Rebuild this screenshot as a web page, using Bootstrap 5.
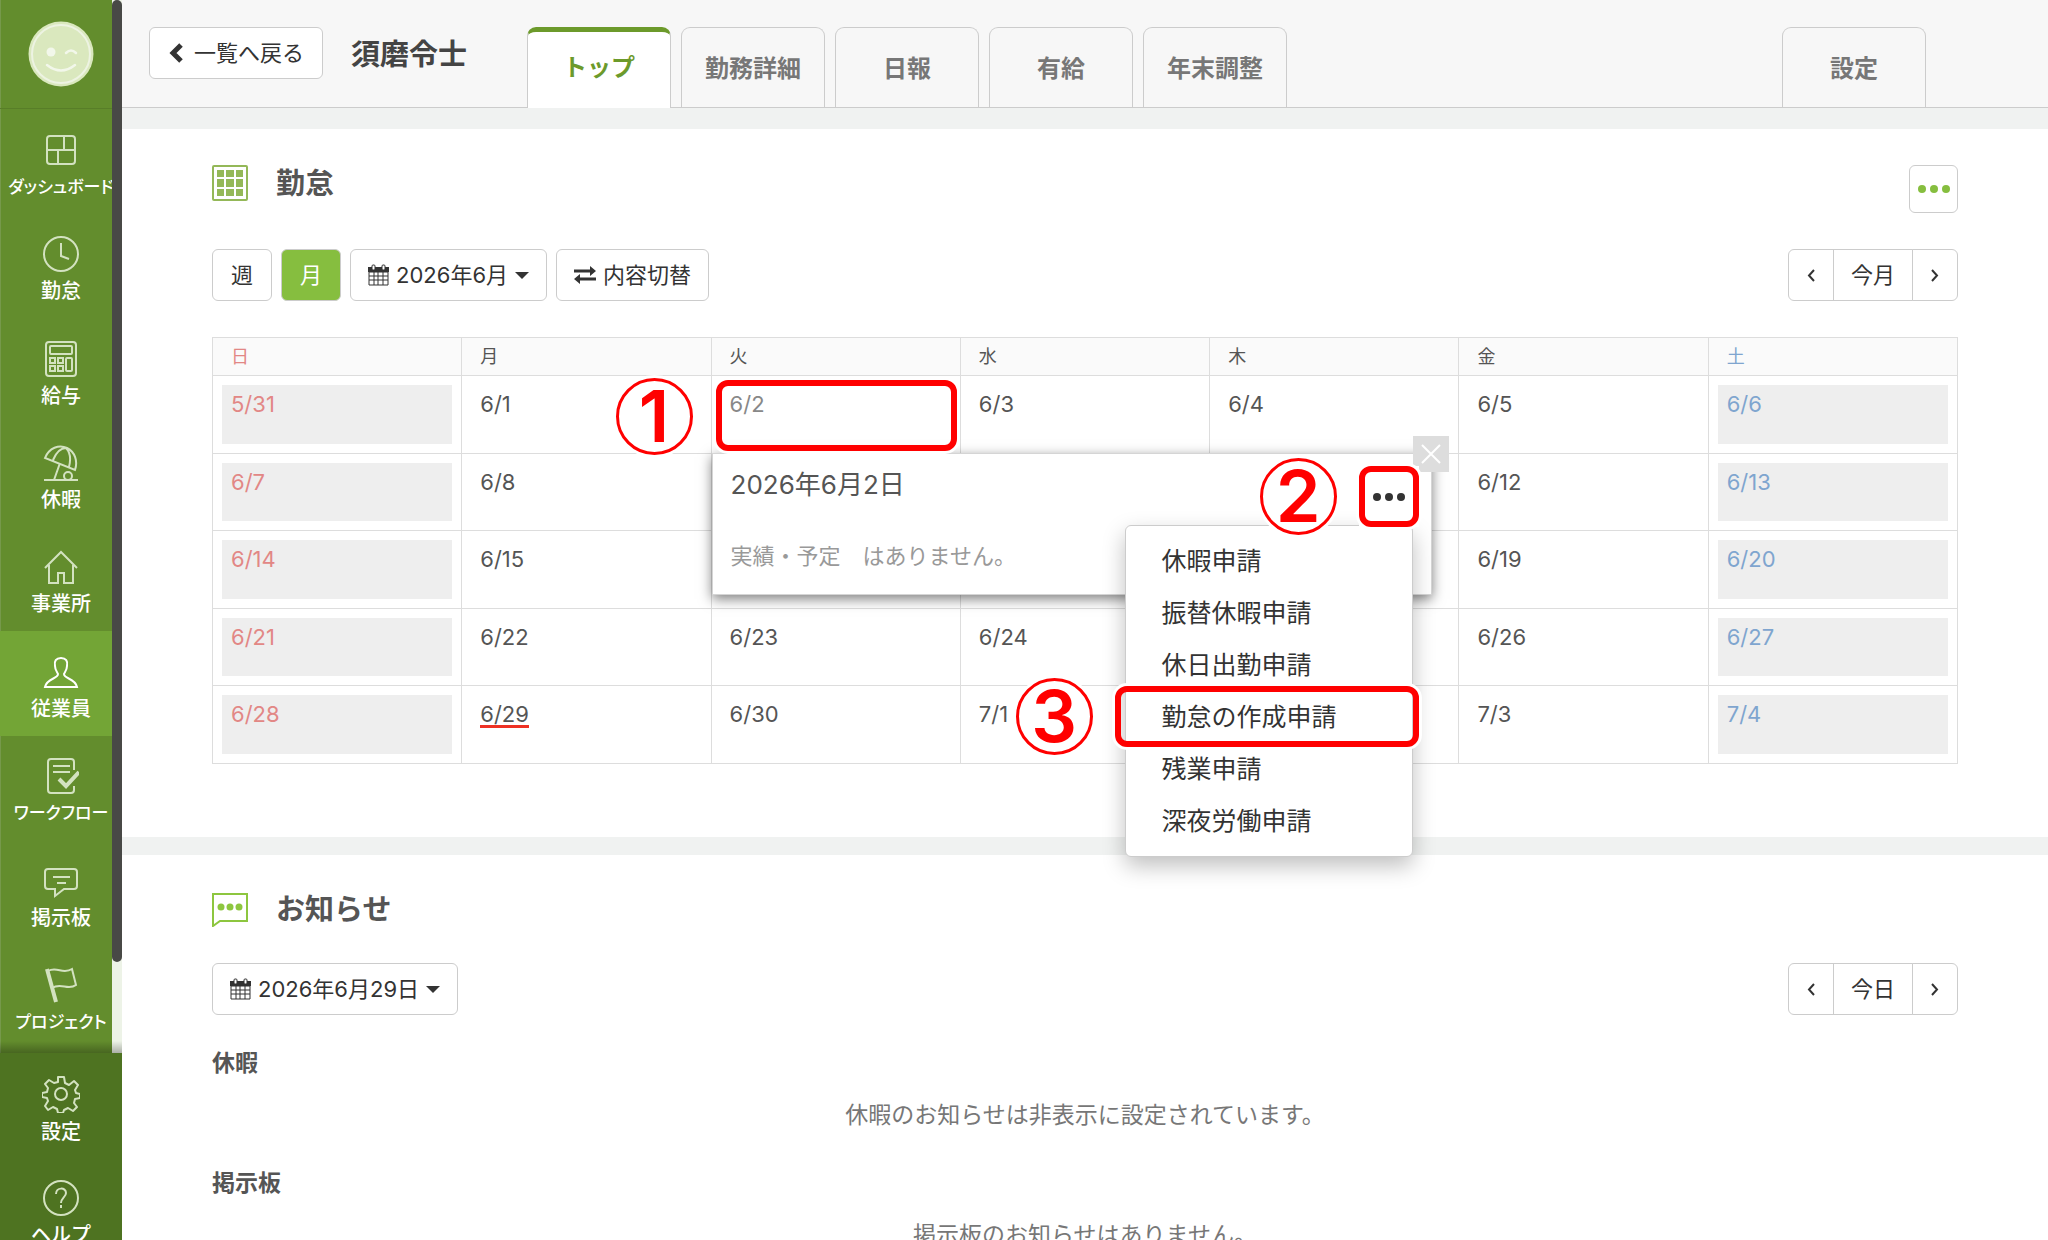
<!DOCTYPE html>
<html lang="ja">
<head>
<meta charset="utf-8">
<meta name="viewport" content="width=device-width, initial-scale=1">
<title>従業員 - 勤怠</title>
<link rel="stylesheet" href="https://cdn.jsdelivr.net/npm/bootstrap@5.3.0/dist/css/bootstrap.min.css">
<style>
:root { --line:#ddd; --btn-line:#ccc; --ink:#333; --title:#555; --green:#86be3f; --alert:#f00; }
body { font-family: Inter, "Noto Sans CJK JP", sans-serif; font-size:22px; line-height:30px; color:var(--title); background:#fff; }
svg { display:block; flex:none; }
.app-shell { height:100vh; overflow:hidden; }
.side { width:122px; background:#4e7321; }
.side-scroll { background:#638d2d; flex:1 1 0; min-height:0; padding-bottom:4px; box-shadow:inset 1px 0 #76994b; overflow:hidden; position:relative; }
.side-scroll::before { content:""; position:absolute; inset:0 0 0 auto; width:10px; background:#edf3e7; z-index:1; }
.side-scroll::after { content:""; position:absolute; inset:auto 0 0 0; height:12px; background:linear-gradient(transparent, rgba(0,0,0,.28)); z-index:3; }
.side-thumb { position:absolute; top:0; right:0; width:10px; height:962px; border-radius:5px; background:#484946; z-index:2; }
.side-avatar { height:109px; border-bottom:1px solid #587e28; }
.side-link { color:#fff; text-decoration:none; font-size:20px; line-height:24px; font-weight:500; gap:7px; padding-top:8px; white-space:nowrap; }
.side-link svg { stroke:#d3e2c0; fill:none; stroke-width:2; }
.side-link.current { background:#73a536; }
.side-link.current svg { stroke:#fff; }
.side-link .kana { font-size:17px; font-feature-settings:"palt"; }
.side-fixed { height:187px; overflow:hidden; }
.side-fixed .side-link { height:104px; flex:none; }
.top-bar { height:108px; background:#f7f7f7; border-bottom:1px solid #ccc; padding:27px 122px 0 27px; }
.btn-plain { --bs-btn-color:var(--ink); --bs-btn-bg:#fff; --bs-btn-border-color:var(--btn-line); --bs-btn-border-radius:6px; --bs-btn-font-size:22px; --bs-btn-line-height:30px; --bs-btn-padding-y:10px; --bs-btn-padding-x:18px; --bs-btn-hover-bg:#f5f5f5; --bs-btn-hover-border-color:#bbb; --bs-btn-hover-color:var(--ink); white-space:nowrap; }
.btn-plain.chosen { background:var(--green); color:#fff; }
.btn-date, .btn-swap { gap:7px; --bs-btn-padding-x:17px; }
.person { font-size:29px; line-height:56px; font-weight:700; color:#444; margin:0 60px 0 28px; white-space:nowrap; }
.top-tabs { gap:10px; }
.top-tab { width:144px; height:80px; border:1px solid #ccc; border-bottom:0; border-radius:9px 9px 0 0; color:#777; font-size:24px; font-weight:700; text-decoration:none; padding-top:2px; }
.top-tab.current { height:81px; background:#fff; color:#6c9a2b; border-top:5px solid #6c9a2b; padding:0 0 4px; }
.strip { height:21px; background:#f0f2f1; }
.strip.thin { height:18px; }
.panel { padding:36px 90px 0; }
.panel-title { font-size:29px; line-height:38px; font-weight:700; margin:0 0 -2px; }
.tool-row { margin-top:36px; gap:9px; }
.dots-btn { width:49px; height:48px; padding:0; display:grid; place-items:center; }
.pager .btn { padding-left:17px; padding-right:17px; }
.pager .btn:not(.mid) { width:46px; padding-left:0; padding-right:0; display:grid; place-items:center; }
.caret-mark { border:7px solid transparent; border-top-color:var(--ink); border-bottom:0; }
.month { table-layout:fixed; width:100%; border-collapse:collapse; margin:36px 0 73px; }
.month th { height:38px; padding:1px 18px 0; background:#fafafa; border:1px solid var(--line); font-size:18px; line-height:30px; font-weight:400; }
.month td { height:78px; padding:9px; border:1px solid var(--line); vertical-align:top; }
.month tr:nth-child(even) td { height:77px; }
.day { height:59px; padding:4px 9px; }
.month tr:nth-child(even) .day { height:58px; }
.off .day { background:#eee; }
.sun { color:#e28785; }
.sat { color:#7fa5cf; }
.picked { position:relative; color:#888; box-shadow:0 0 8px #a5d067; }
.now span { border-bottom:3px solid #ee3124; display:inline-block; line-height:22px; }
.pop { position:absolute; left:0; top:100%; width:720px; height:142px; background:#fff; border:1px solid #d5d5d5; box-shadow:0 4px 12px rgba(0,0,0,.5); padding:15px 18px; z-index:5; }
.pop-title { font-size:26px; line-height:32px; font-weight:400; color:var(--title); margin:0 0 39px; }
.pop-note { color:#999; margin:0; line-height:32px; }
.pop-close { position:absolute; right:-18px; top:-18px; width:36px; height:36px; border:0; padding:0; background:#ddd; display:grid; place-items:center; z-index:1; }
.pop-more { position:absolute; right:12px; top:12px; width:60px; height:61px; border:0; padding:0; background:#fff; display:grid; place-items:center; z-index:2; }
.req-menu { position:absolute; right:18px; top:71px; width:288px; margin:0; padding:9px 0; background:#fff; border:1px solid #ccc; border-radius:6px; box-shadow:0 9px 22px rgba(0,0,0,.25); list-style:none; }
.req-menu a { display:block; padding:10px 36px; line-height:32px; font-size:25px; color:var(--ink); text-decoration:none; }
.req-menu li { position:relative; }
.ring { position:absolute; border:6px solid var(--alert); border-radius:12px; box-shadow:0 0 0 3px #fff; pointer-events:none; z-index:6; }
.ring-day { left:4px; right:3px; top:4px; bottom:2px; }
.ring-more { inset:0; }
.ring-item { left:-11px; right:-7px; top:-5px; bottom:-4px; }
.step { position:absolute; width:77px; height:77px; border:3px solid var(--alert); border-radius:50%; background:#fff; box-shadow:0 0 0 3px #fff; color:var(--alert); font-size:72px; font-weight:600; line-height:70px; text-align:center; z-index:7; }
.step-one { left:-96px; top:2px; }
.step-two { right:94px; top:4px; }
.step-three { left:-110px; top:-13px; }
.news-head { font-size:23px; line-height:34px; font-weight:700; margin:31px 0 0; }
.news-text { font-size:23px; line-height:34px; color:#777; text-align:center; margin:18px 0 0; }
.news-text + .news-head { margin-top:34px; }
</style>
<script src="https://cdn.jsdelivr.net/npm/bootstrap@5.3.0/dist/js/bootstrap.bundle.min.js"></script>
</head>
<body>
<div class="app-shell d-flex">
  <nav class="side d-flex flex-column flex-shrink-0" aria-label="メインメニュー">
    <div class="side-scroll d-flex flex-column">
      <div class="side-thumb"></div>
      <div class="side-avatar d-flex align-items-center justify-content-center flex-shrink-0">
        <svg width="66" height="66" viewBox="0 0 66 66"><circle cx="33" cy="33" r="32.500" fill="#dae8be"/><circle cx="33" cy="33" r="29" fill="none" stroke="#edf3e2" stroke-width="2"/><circle cx="23" cy="31" r="4.500" fill="#f2f7ea"/><path d="M38 32q5-5 10 0M19 44q14 11 28 0" fill="none" stroke="#f2f7ea" stroke-width="2.500" stroke-linecap="round"/></svg>
      </div>
      <a class="side-link flex-fill d-flex flex-column align-items-center justify-content-center" href="#"><svg width="36" height="36" viewBox="0 0 36 36"><rect x="4" y="4" width="28" height="28" rx="3"/><path d="M4 18h28M21 4v14M15 18v14"/></svg><span class="kana">ダッシュボード</span></a>
      <a class="side-link flex-fill d-flex flex-column align-items-center justify-content-center" href="#"><svg width="36" height="36" viewBox="0 0 36 36"><circle cx="18" cy="18" r="17"/><path d="M18 7v13l8 3"/></svg><span>勤怠</span></a>
      <a class="side-link flex-fill d-flex flex-column align-items-center justify-content-center" href="#"><svg width="36" height="36" viewBox="0 0 36 36"><rect x="3" y="1" width="30" height="34" rx="3"/><rect x="7" y="5" width="22" height="8" rx="1"/><rect x="7" y="17" width="5" height="5"/><rect x="15" y="17" width="5" height="5"/><rect x="7" y="25" width="5" height="5"/><rect x="15" y="25" width="5" height="5"/><rect x="23" y="17" width="6" height="13" rx="1"/></svg><span>給与</span></a>
      <a class="side-link flex-fill d-flex flex-column align-items-center justify-content-center" href="#"><svg width="36" height="36" viewBox="0 0 36 36"><path d="M2 13C6 3 16-1 24 3s11 13 8 22zM10 15C13 8 17 3 23 3M26 22C28 14 27 7 23 3M17 18l-6 17M1 35h34"/><circle cx="25" cy="31" r="4"/></svg><span>休暇</span></a>
      <a class="side-link flex-fill d-flex flex-column align-items-center justify-content-center" href="#"><svg width="36" height="36" viewBox="0 0 36 36"><path d="M2 19L18 3l16 16M6 16v18h9V24h6v10h9V16"/></svg><span>事業所</span></a>
      <a class="side-link current flex-fill d-flex flex-column align-items-center justify-content-center" href="#"><svg width="36" height="36" viewBox="0 0 36 36"><path d="M18 4c-5 0-7 3-6 8 0 4 2 6 3 8 0 5-11 4-13 13h32c-2-9-13-8-13-13 1-2 3-4 3-8 1-5-1-8-6-8z"/></svg><span>従業員</span></a>
      <a class="side-link flex-fill d-flex flex-column align-items-center justify-content-center" href="#"><svg width="36" height="36" viewBox="0 0 36 36"><path d="M31 12V4q0-3-3-3H8Q5 1 5 4v28q0 3 3 3h20q3 0 3-3v-4M10 8h17M10 14h17"/><path d="M16 21l7 7 13-14" stroke-width="4"/></svg><span class="kana">ワークフロー</span></a>
      <a class="side-link flex-fill d-flex flex-column align-items-center justify-content-center" href="#"><svg width="36" height="36" viewBox="0 0 36 36"><path d="M5 6h26q3 0 3 3v14q0 3-3 3H21l-9 7v-7H5q-3 0-3-3V9q0-3 3-3zM10 14h17M14 20h9"/></svg><span>掲示板</span></a>
      <a class="side-link flex-fill d-flex flex-column align-items-center justify-content-center" href="#"><svg width="36" height="36" viewBox="0 0 36 36"><path d="M5 4c9-5 15 4 24-2l4 16c-8 6-15-3-24 3"/><path d="M4 2l9 33" stroke-width="4"/></svg><span class="kana">プロジェクト</span></a>
    </div>
    <div class="side-fixed d-flex flex-column">
      <a class="side-link d-flex flex-column align-items-center justify-content-center" href="#"><svg width="38" height="38" viewBox="0 0 38 38"><path d="M16 2h6l1 6 4 2 5-4 4 4-3 5 1 3 4 1v4l-5 1-1 4 3 4-4 4-5-3-4 2-1 3h-5l-1-4-4-2-5 3-3-4 3-5-1-3-5-1v-4l5-1 1-4-3-4 4-4 5 3 4-1z" stroke-linejoin="round"/><circle cx="19" cy="19" r="6"/></svg><span>設定</span></a>
      <a class="side-link d-flex flex-column align-items-center justify-content-center" href="#"><svg width="36" height="36" viewBox="0 0 36 36"><circle cx="18" cy="18" r="17"/><path d="M13 14c0-7 10-7 10-1 0 4-5 5-5 10M18 25v3"/></svg><span>ヘルプ</span></a>
    </div>
  </nav>

  <main class="flex-grow-1 overflow-hidden">
    <header class="top-bar d-flex align-items-start">
      <button class="btn btn-plain d-flex align-items-center" type="button"><svg class="me-2" width="18" height="22" viewBox="1 0 18 22"><path d="M14 3L6 11l8 8" fill="none" stroke="#333" stroke-width="5"/></svg>一覧へ戻る</button>
      <h1 class="person">須磨令士</h1>
      <div class="top-tabs d-flex flex-grow-1">
        <a class="top-tab current d-flex align-items-center justify-content-center" href="#">トップ</a>
        <a class="top-tab d-flex align-items-center justify-content-center" href="#">勤務詳細</a>
        <a class="top-tab d-flex align-items-center justify-content-center" href="#">日報</a>
        <a class="top-tab d-flex align-items-center justify-content-center" href="#">有給</a>
        <a class="top-tab d-flex align-items-center justify-content-center" href="#">年末調整</a>
        <a class="top-tab d-flex align-items-center justify-content-center ms-auto" href="#">設定</a>
      </div>
    </header>
    <div class="strip"></div>

    <section class="panel">
      <div class="d-flex align-items-start">
        <svg width="36" height="36" viewBox="0 0 36 36"><rect x="1" y="1" width="34" height="34" rx="1" fill="none" stroke="#94b858" stroke-width="2"/><path d="M5 5h7v7H5zM14 5h8v7h-8zM24 5h7v7h-7zM5 14h7v8H5zM14 14h8v8h-8zM24 14h7v8h-7zM5 24h7v7H5zM14 24h8v7h-8zM24 24h7v7h-7z" fill="#94b858"/></svg>
        <h2 class="panel-title ms-4 ps-1">勤怠</h2>
        <button class="btn btn-plain dots-btn ms-auto" type="button" aria-label="メニュー"><svg width="34" height="10" viewBox="0 0 34 10" fill="#86be3f"><circle cx="5" cy="5" r="4"/><circle cx="17" cy="5" r="4"/><circle cx="29" cy="5" r="4"/></svg></button>
      </div>
      <div class="tool-row d-flex">
        <button class="btn btn-plain" type="button">週</button>
        <button class="btn btn-plain chosen" type="button">月</button>
        <button class="btn btn-plain btn-date d-flex align-items-center" type="button"><svg width="21" height="22" viewBox="0 0 21 22"><path d="M1 8h19v13H1zM1 12h19M1 16h19M6 8v13M10 8v13M15 8v13" fill="none" stroke="#333"/><path d="M0 3h21v5H0z" fill="#333"/><rect x="4" y="1" width="3" height="5" rx="1" fill="#fff" stroke="#333"/><rect x="14" y="1" width="3" height="5" rx="1" fill="#fff" stroke="#333"/></svg>2026年6月<span class="caret-mark"></span></button>
        <button class="btn btn-plain btn-swap d-flex align-items-center" type="button"><svg width="22" height="18" viewBox="0 0 22 18"><path d="M0 5h17M5 13h17" stroke="#333" stroke-width="3"/><path d="M16 0l6 5-6 5zM6 8v10l-6-5z" fill="#333"/></svg>内容切替</button>
        <div class="btn-group pager ms-auto">
          <button class="btn btn-plain" type="button" aria-label="前の月"><svg width="8" height="13" viewBox="0 0 8 13"><path d="M7 1L2 6.500l5 5.500" fill="none" stroke="#333" stroke-width="2"/></svg></button>
          <button class="btn btn-plain mid" type="button">今月</button>
          <button class="btn btn-plain" type="button" aria-label="次の月"><svg width="8" height="13" viewBox="0 0 8 13"><path d="M1 1l5 5.500L1 12" fill="none" stroke="#333" stroke-width="2"/></svg></button>
        </div>
      </div>

      <table class="month">
        <thead><tr><th class="sun">日</th><th>月</th><th>火</th><th>水</th><th>木</th><th>金</th><th class="sat">土</th></tr></thead>
        <tbody>
          <tr><td class="off sun"><div class="day">5/31</div></td><td><div class="day">6/1</div></td>
            <td class="picked"><div class="day">6/2</div>
              <span class="step step-one">1</span><span class="ring ring-day"></span>
              <div class="pop">
                <h3 class="pop-title">2026年6月2日</h3>
                <p class="pop-note">実績・予定　はありません。</p>
                <button class="pop-close" type="button" aria-label="閉じる"><svg width="20" height="20" viewBox="0 0 20 20"><path d="M1 1l18 18M19 1L1 19" stroke="#fff" stroke-width="2"/></svg></button>
                <ul class="req-menu">
                  <li><a href="#">休暇申請</a></li>
                  <li><a href="#">振替休暇申請</a></li>
                  <li><a href="#">休日出勤申請</a></li>
                  <li><a href="#">勤怠の作成申請</a><span class="ring ring-item"></span><span class="step step-three">3</span></li>
                  <li><a href="#">残業申請</a></li>
                  <li><a href="#">深夜労働申請</a></li>
                </ul>
                <button class="pop-more" type="button" aria-label="申請メニュー"><svg width="34" height="10" viewBox="0 0 34 10" fill="#333"><circle cx="5" cy="5" r="4"/><circle cx="17" cy="5" r="4"/><circle cx="29" cy="5" r="4"/></svg><span class="ring ring-more"></span></button>
                <span class="step step-two">2</span>
              </div>
            </td>
            <td><div class="day">6/3</div></td><td><div class="day">6/4</div></td><td><div class="day">6/5</div></td><td class="off sat"><div class="day">6/6</div></td></tr>
          <tr><td class="off sun"><div class="day">6/7</div></td><td><div class="day">6/8</div></td><td></td><td></td><td></td><td><div class="day">6/12</div></td><td class="off sat"><div class="day">6/13</div></td></tr>
          <tr><td class="off sun"><div class="day">6/14</div></td><td><div class="day">6/15</div></td><td></td><td></td><td></td><td><div class="day">6/19</div></td><td class="off sat"><div class="day">6/20</div></td></tr>
          <tr><td class="off sun"><div class="day">6/21</div></td><td><div class="day">6/22</div></td><td><div class="day">6/23</div></td><td><div class="day">6/24</div></td><td></td><td><div class="day">6/26</div></td><td class="off sat"><div class="day">6/27</div></td></tr>
          <tr><td class="off sun"><div class="day">6/28</div></td><td class="now"><div class="day"><span>6/29</span></div></td><td><div class="day">6/30</div></td><td><div class="day">7/1</div></td><td></td><td><div class="day">7/3</div></td><td class="off sat"><div class="day">7/4</div></td></tr>
        </tbody>
      </table>
    </section>
    <div class="strip thin"></div>

    <section class="panel">
      <div class="d-flex align-items-start">
        <svg width="36" height="36" viewBox="0 0 36 36"><path d="M1 3h34v27H8l-7 5z" fill="none" stroke="#8dc63f" stroke-width="2"/><g fill="#8dc63f"><circle cx="9" cy="16" r="3.500"/><circle cx="18" cy="16" r="3.500"/><circle cx="27" cy="16" r="3.500"/></g></svg>
        <h2 class="panel-title ms-4 ps-1">お知らせ</h2>
      </div>
      <div class="tool-row d-flex">
        <button class="btn btn-plain btn-date d-flex align-items-center" type="button"><svg width="21" height="22" viewBox="0 0 21 22"><path d="M1 8h19v13H1zM1 12h19M1 16h19M6 8v13M10 8v13M15 8v13" fill="none" stroke="#333"/><path d="M0 3h21v5H0z" fill="#333"/><rect x="4" y="1" width="3" height="5" rx="1" fill="#fff" stroke="#333"/><rect x="14" y="1" width="3" height="5" rx="1" fill="#fff" stroke="#333"/></svg>2026年6月29日<span class="caret-mark"></span></button>
        <div class="btn-group pager ms-auto">
          <button class="btn btn-plain" type="button" aria-label="前の日"><svg width="8" height="13" viewBox="0 0 8 13"><path d="M7 1L2 6.500l5 5.500" fill="none" stroke="#333" stroke-width="2"/></svg></button>
          <button class="btn btn-plain mid" type="button">今日</button>
          <button class="btn btn-plain" type="button" aria-label="次の日"><svg width="8" height="13" viewBox="0 0 8 13"><path d="M1 1l5 5.500L1 12" fill="none" stroke="#333" stroke-width="2"/></svg></button>
        </div>
      </div>
      <h3 class="news-head">休暇</h3>
      <p class="news-text">休暇のお知らせは非表示に設定されています。</p>
      <h3 class="news-head">掲示板</h3>
      <p class="news-text">掲示板のお知らせはありません。</p>
    </section>
  </main>
</div>
</body>
</html>
